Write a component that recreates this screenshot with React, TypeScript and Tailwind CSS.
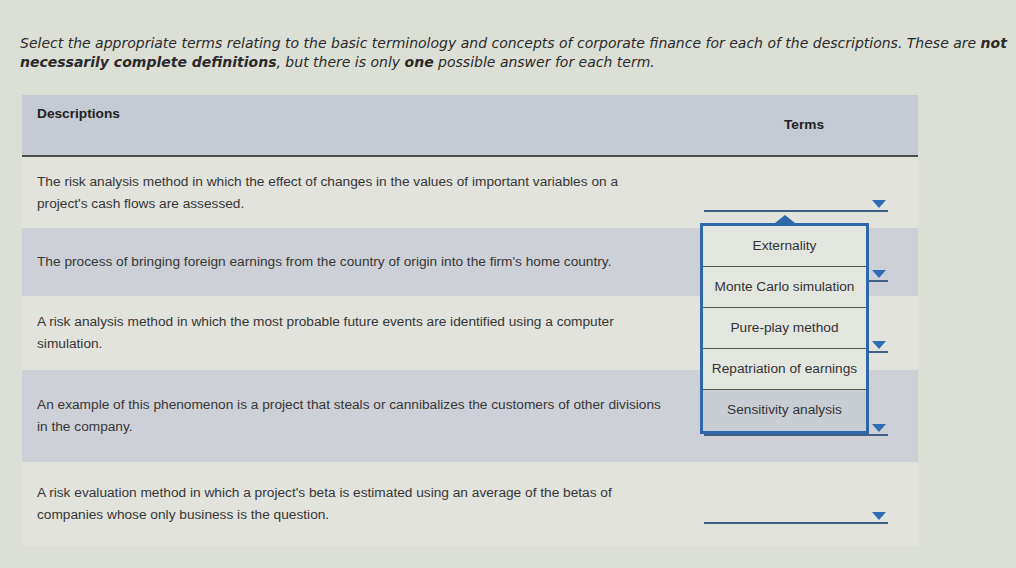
import React from 'react';

type Row = {
  lines: string[];
  shade: boolean;
  height: string;
};

const rows: Row[] = [
  {
    lines: [
      'The risk analysis method in which the effect of changes in the values of important variables on a',
      "project's cash flows are assessed.",
    ],
    shade: false,
    height: 'h-[71px]',
  },
  {
    lines: ["The process of bringing foreign earnings from the country of origin into the firm's home country."],
    shade: true,
    height: 'h-[68px]',
  },
  {
    lines: [
      'A risk analysis method in which the most probable future events are identified using a computer',
      'simulation.',
    ],
    shade: false,
    height: 'h-[74px]',
  },
  {
    lines: [
      'An example of this phenomenon is a project that steals or cannibalizes the customers of other divisions',
      'in the company.',
    ],
    shade: true,
    height: 'h-[92px]',
  },
  {
    lines: [
      "A risk evaluation method in which a project's beta is estimated using an average of the betas of",
      'companies whose only business is the question.',
    ],
    shade: false,
    height: 'h-[84px]',
  },
];

const options = [
  'Externality',
  'Monte Carlo simulation',
  'Pure-play method',
  'Repatriation of earnings',
  'Sensitivity analysis',
];

function Caret() {
  return (
    <svg width="14" height="8" viewBox="0 0 14 8" className="block">
      <path d="M0 0 H14 L7 8 Z" fill="#2e6db3" />
    </svg>
  );
}

function Dropdown() {
  return (
    <div className="ml-[14px] mt-[11px] flex h-[28px] w-[184px] items-end justify-end border-b-2 border-[#3f5f84] pb-[2px] pr-[2px]">
      <Caret />
    </div>
  );
}

export default function App() {
  return (
    <div className="h-[568px] w-[1016px] overflow-hidden bg-[#dcdfd6] font-['Liberation_Sans',Arial,sans-serif] text-[#333]">
      <p className="whitespace-nowrap px-[20px] pt-[34px] font-['DejaVu_Sans',Verdana,sans-serif] text-[14px] italic leading-[19px] text-[#2a2a2a]">
        Select the appropriate terms relating to the basic terminology and concepts of corporate finance for each of
        the descriptions. These are <b>not</b>
        <br />
        <b>necessarily complete definitions</b>, but there is only <b>one</b> possible answer for each term.
      </p>

      <div className="relative ml-[22px] mt-[23px] w-[896px]">
        <div className="flex h-[62px] border-b-2 border-[#4d4d4d] bg-[#c5cad3]">
          <div className="w-[668px] pl-[15px] pt-[9px] text-[13.7px] font-bold text-[#222]">Descriptions</div>
          <div className="flex flex-1 items-center justify-center text-[13.7px] font-bold text-[#222]">Terms</div>
        </div>

        {rows.map((row, i) => (
          <div
            key={i}
            className={`flex ${row.height} ${row.shade ? 'bg-[#cdd1d7]' : 'bg-[#e1e3dc]'}`}
          >
            <div className="flex w-[668px] items-center pl-[15px] text-[13.7px] leading-[22px] text-[#363636]">
              <div className="whitespace-nowrap">
                {row.lines.map((l, j) => (
                  <div key={j}>{l}</div>
                ))}
              </div>
            </div>
            <div className="flex flex-1 items-center">
              <Dropdown />
            </div>
          </div>
        ))}

        <div className="absolute left-[678px] top-[120px] w-[169px]">
          <div className="flex justify-center">
            <svg width="20" height="8" viewBox="0 0 20 8" className="block">
              <path d="M0 8 L10 0 L20 8 Z" fill="#2e68a8" />
            </svg>
          </div>
          <div className="border-[3px] border-[#2e68a8] bg-[#e3e5df]">
            {options.map((o, i) => (
              <div
                key={o}
                className={`flex h-[41px] items-center justify-center text-[13.7px] text-[#333] ${
                  i < options.length - 1 ? 'border-b border-[#555]' : 'bg-[#c9ced5]'
                }`}
              >
                {o}
              </div>
            ))}
          </div>
        </div>
      </div>
    </div>
  );
}
